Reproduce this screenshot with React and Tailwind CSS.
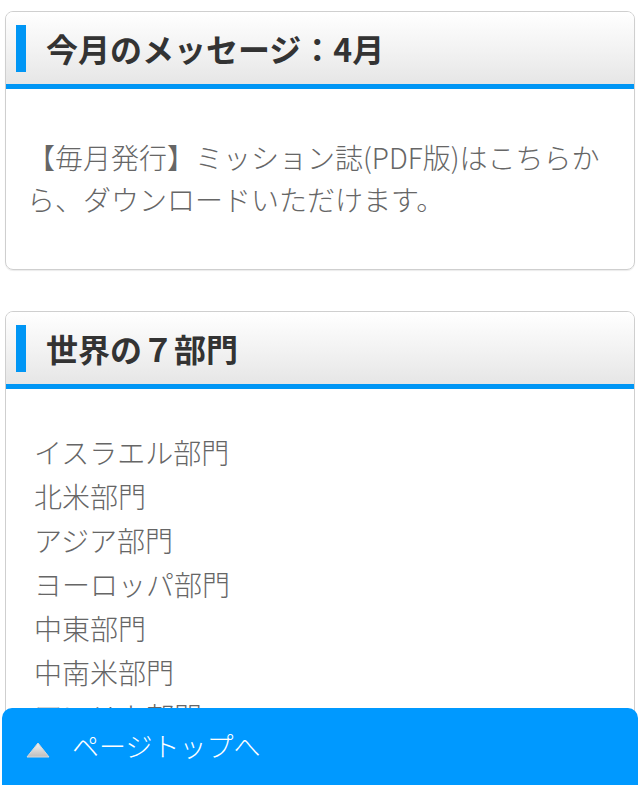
import React from 'react';

const font = { fontFamily: '"Noto Sans CJK JP", "Noto Sans", sans-serif' };

const sections = ['イスラエル部門', '北米部門', 'アジア部門', 'ヨーロッパ部門', '中東部門', '中南米部門', 'アフリカ部門'];

function BoxTitle({ children }) {
  return (
    <div className="flex items-center h-[77px] pl-[10px] bg-gradient-to-b from-white via-[#f3f3f3] to-[#e6e6e6] border-b-[5px] border-[#0096f5]">
      <span className="block w-[10px] h-[47px] bg-[#0096f5]" />
      <h2 className="ml-[20px] text-[32px] leading-none font-bold text-[#333]">{children}</h2>
    </div>
  );
}

export default function App() {
  return (
    <div className="bg-white min-h-screen pt-[11px] pb-[120px]" style={font}>
      {/* 今月のメッセージ */}
      <section className="mx-[5px] rounded-[8px] border border-[#cfcfcf] shadow-[0_1px_1px_rgba(0,0,0,0.08)] overflow-hidden">
        <BoxTitle>今月のメッセージ：4月</BoxTitle>
        <p className="px-[21px] pt-[47px] pb-[49px] text-[28px] leading-[42px] font-light text-[#666]">
          【毎月発行】ミッション誌(PDF版)はこちらから、ダウンロードいただけます。
        </p>
      </section>

      {/* 世界の７部門 */}
      <section className="mx-[5px] mt-[41px] rounded-[8px] border border-[#cfcfcf] overflow-hidden">
        <BoxTitle>世界の７部門</BoxTitle>
        <ul className="pl-[28px] pt-[41px] pb-[40px]">
          {sections.map((s) => (
            <li key={s} className="text-[28px] leading-[44px] font-light text-[#666]">{s}</li>
          ))}
        </ul>
      </section>

      {/* Page top bar */}
      <a href="#" className="fixed bottom-0 left-[2px] right-[2px] h-[77px] flex items-center rounded-t-[10px] bg-[#0099ff] text-white">
        <svg width="24" height="16" viewBox="0 0 24 16" className="ml-[24px] mt-[6px]">
          <defs>
            <linearGradient id="tri" x1="0" y1="0" x2="0" y2="1">
              <stop offset="0" stopColor="#f4f4f4" />
              <stop offset="1" stopColor="#bdbdbd" />
            </linearGradient>
          </defs>
          <polygon points="12,1 23,15 1,15" fill="url(#tri)" stroke="#d8d8d8" strokeWidth="1" strokeLinejoin="round" />
        </svg>
        <span className="ml-[22px] text-[27px] font-light">ページトップへ</span>
      </a>
    </div>
  );
}
